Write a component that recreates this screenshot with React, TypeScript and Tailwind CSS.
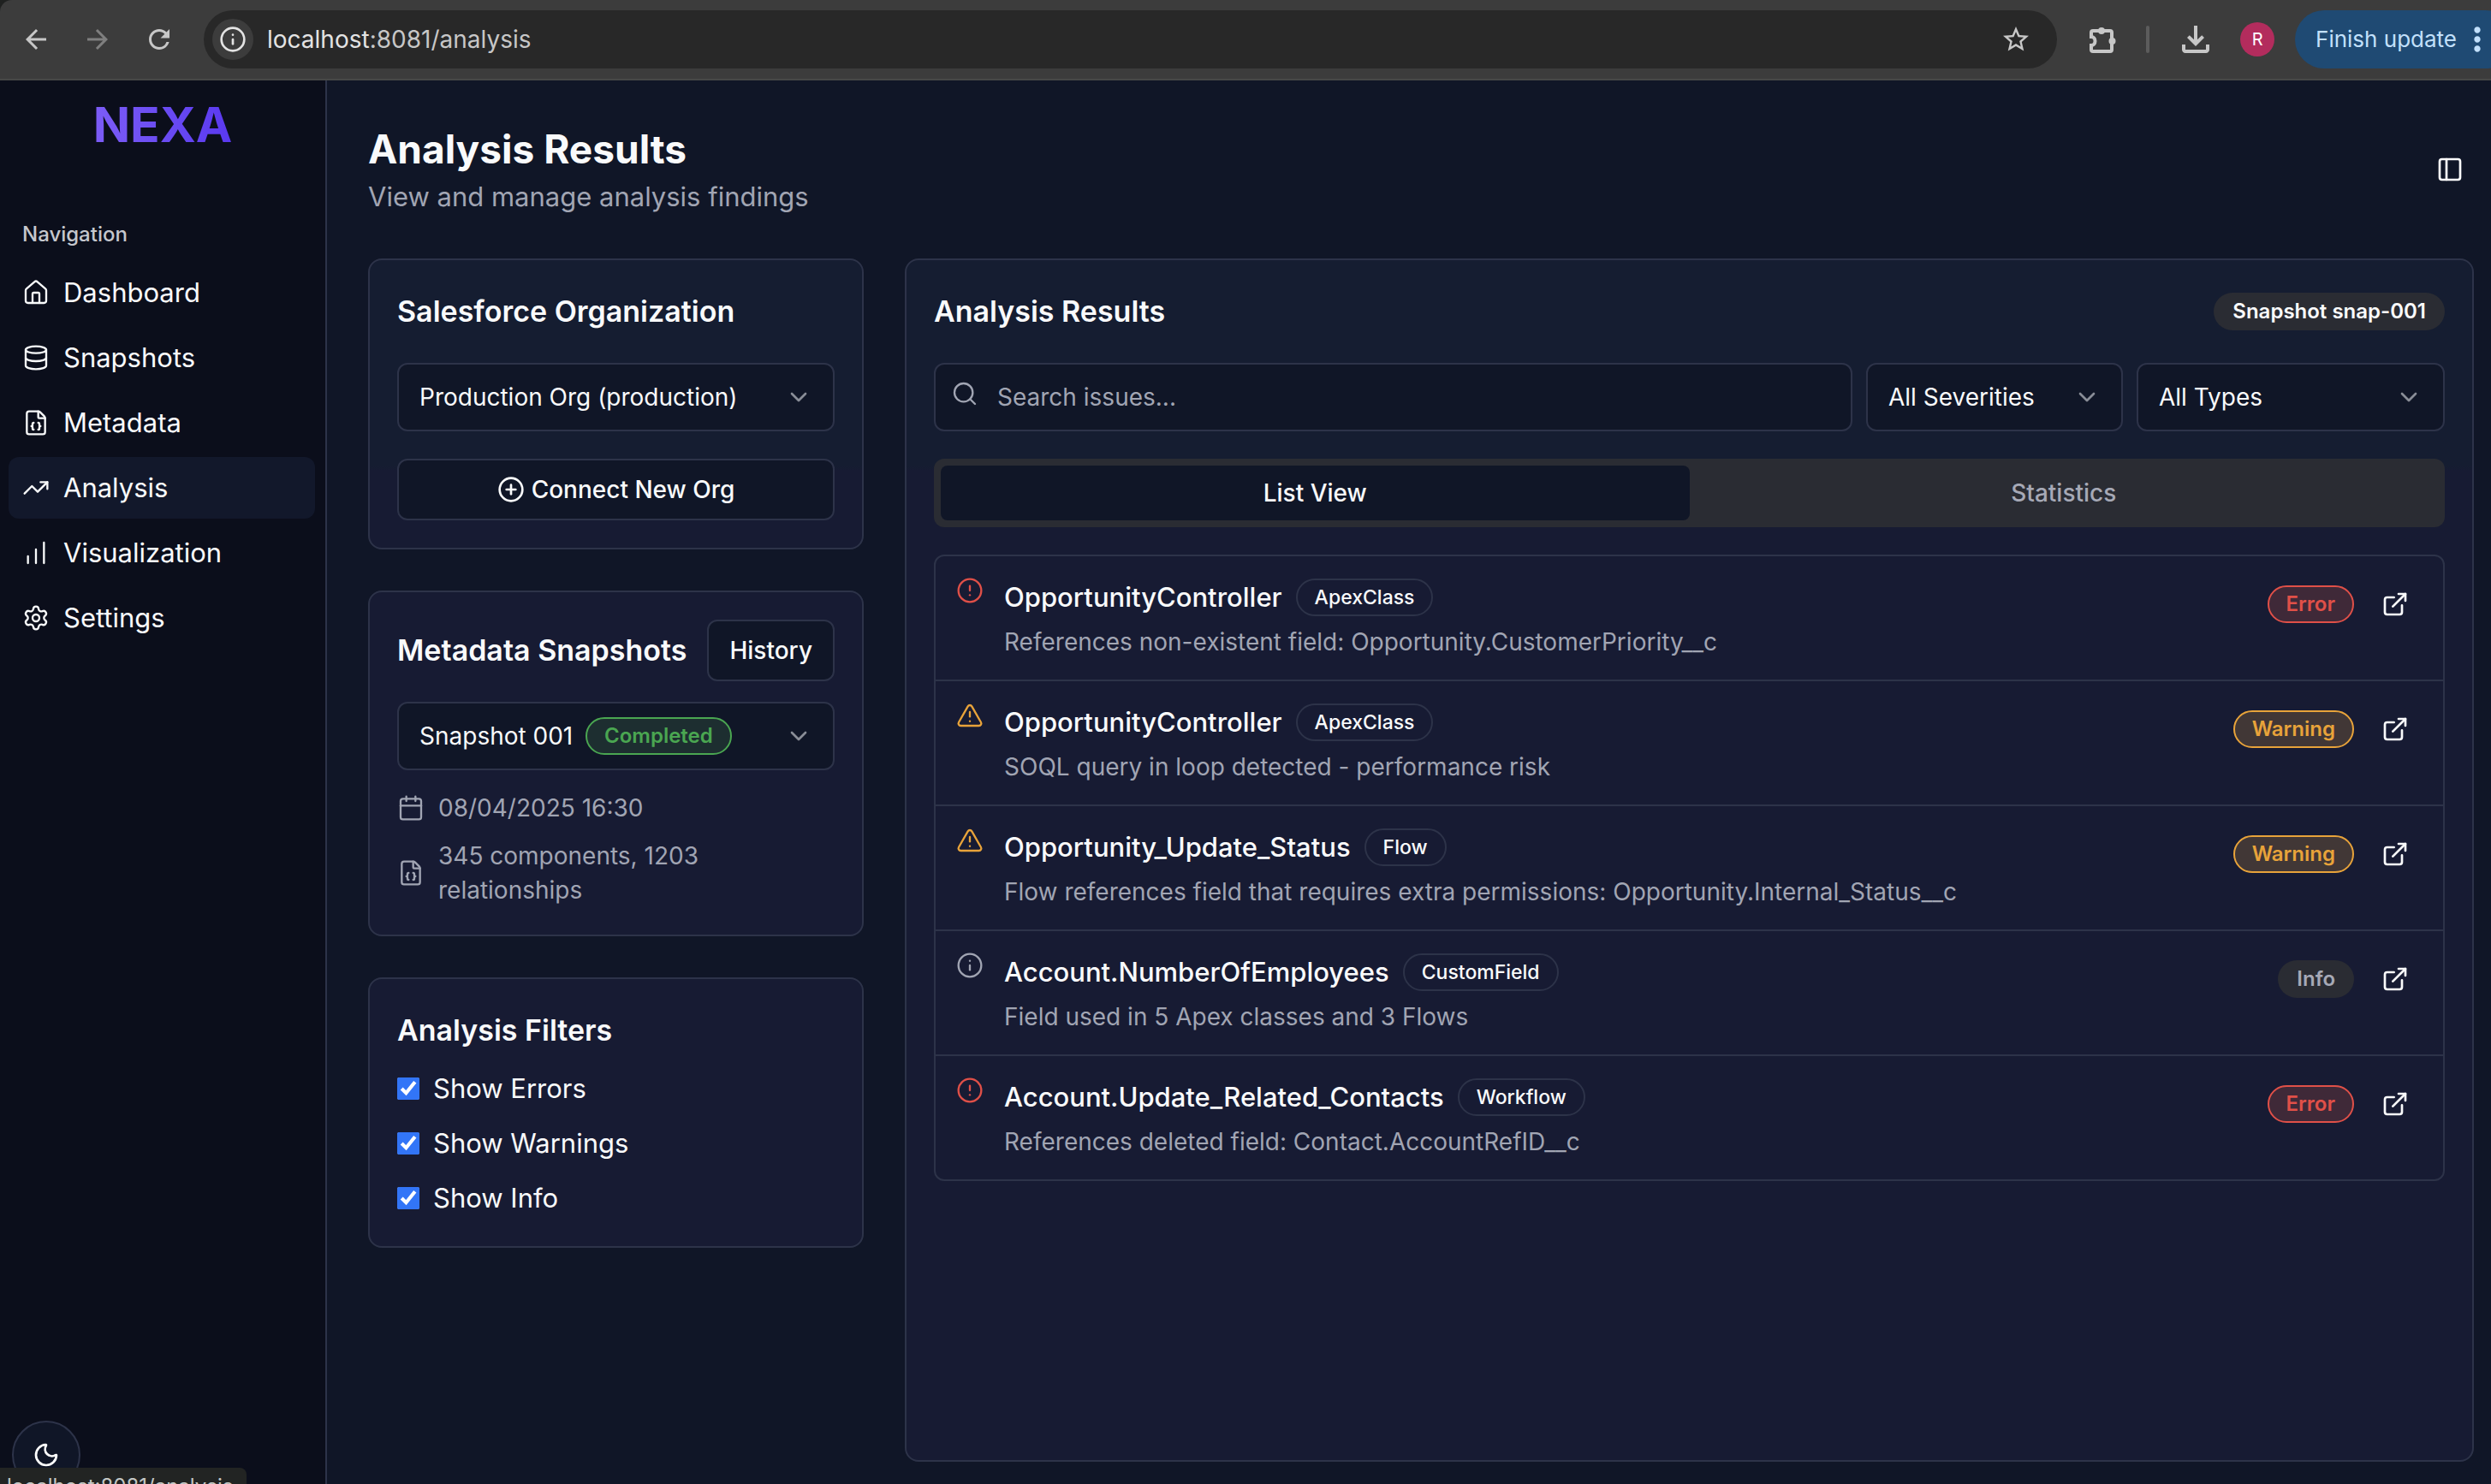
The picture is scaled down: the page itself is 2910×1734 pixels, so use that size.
import React, { useState } from "react";
import {
  Calendar,
  ChartNoAxesColumnIncreasing,
  ChevronDown,
  CircleAlert,
  CirclePlus,
  Database,
  ExternalLink,
  FileJson,
  House,
  Info,
  Moon,
  PanelLeft,
  Search,
  Settings,
  TrendingUp,
  TriangleAlert,
} from "lucide-react";
import {
  MdArrowBack,
  MdArrowForward,
  MdMoreVert,
  MdOutlineFileDownload,
  MdRefresh,
  MdStarBorder,
} from "react-icons/md";

type Severity = "Error" | "Warning" | "Info";

const issues: { name: string; type: string; text: string; severity: Severity }[] = [
  {
    name: "OpportunityController",
    type: "ApexClass",
    text: "References non-existent field: Opportunity.CustomerPriority__c",
    severity: "Error",
  },
  {
    name: "OpportunityController",
    type: "ApexClass",
    text: "SOQL query in loop detected - performance risk",
    severity: "Warning",
  },
  {
    name: "Opportunity_Update_Status",
    type: "Flow",
    text: "Flow references field that requires extra permissions: Opportunity.Internal_Status__c",
    severity: "Warning",
  },
  {
    name: "Account.NumberOfEmployees",
    type: "CustomField",
    text: "Field used in 5 Apex classes and 3 Flows",
    severity: "Info",
  },
  {
    name: "Account.Update_Related_Contacts",
    type: "Workflow",
    text: "References deleted field: Contact.AccountRefID__c",
    severity: "Error",
  },
];

const nav = [
  { label: "Dashboard", icon: House },
  { label: "Snapshots", icon: Database },
  { label: "Metadata", icon: FileJson },
  { label: "Analysis", icon: TrendingUp, active: true },
  { label: "Visualization", icon: ChartNoAxesColumnIncreasing },
  { label: "Settings", icon: Settings },
];

const badgeBase = "inline-flex h-11 items-center rounded-full border-2 px-5 leading-8 whitespace-nowrap";

const badgeTone: Record<Severity, string> = {
  Error: "border-[#e05048] bg-[#3f2938] text-[#e05048]",
  Warning: "border-[#e8a33a] bg-[#413736] text-[#e8a33a]",
  Info: "border-transparent bg-[#2a2c33] text-[#a6a9b6]",
};

function SeverityIcon({ severity }: { severity: Severity }) {
  if (severity === "Error") return <CircleAlert className="size-8 shrink-0 text-[#e05048]" strokeWidth={1.75} />;
  if (severity === "Warning") return <TriangleAlert className="size-8 shrink-0 text-[#e8a33a]" strokeWidth={1.75} />;
  return <Info className="size-8 shrink-0 text-[#a1a5b3]" strokeWidth={1.75} />;
}

function PuzzleIcon() {
  return (
    <svg viewBox="0 0 36 36" className="size-9" fill="none" stroke="currentColor" strokeWidth="4">
      <path d="M6 8H26a2 2 0 0 1 2 2V30a2 2 0 0 1-2 2H6a2 2 0 0 1-2-2v-5c2.600 0 4.500-2 4.500-5s-1.900-5-4.500-5v-5a2 2 0 0 1 2-2z" />
      <circle cx="16" cy="8" r="4" fill="currentColor" stroke="none" />
      <circle cx="28.500" cy="20" r="4" fill="currentColor" stroke="none" />
    </svg>
  );
}

function Dropdown({
  label,
  value,
  className = "",
  children,
}: {
  label: string;
  value: string;
  className?: string;
  children?: React.ReactNode;
}) {
  return (
    <div className={`relative ${className}`}>
      <select
        aria-label={label}
        className="h-20 w-full appearance-none rounded-xl border-2 border-[#2d3349] bg-[#101627] px-6 text-[28px] leading-10 text-[#f9fafb]"
      >
        <option>{value}</option>
      </select>
      {children}
      <ChevronDown className="pointer-events-none absolute top-6 right-6.5 size-8 text-[#898d97]" />
    </div>
  );
}

function BrowserBar() {
  return (
    <header className="bg-[#1f2120]">
      <div className="flex h-[94px] items-center rounded-tl-[14px] border-b-2 border-[#474847] bg-[#3c3c3c] text-[#c7c7c7]">
        <nav aria-label="Browser" className="ml-6 flex gap-9">
          <button aria-label="Back">
            <MdArrowBack className="size-9" />
          </button>
          <button aria-label="Forward" className="text-[#7f7f7f]">
            <MdArrowForward className="size-9" />
          </button>
          <button aria-label="Reload">
            <MdRefresh className="size-9" />
          </button>
        </nav>
        <div className="ml-8.5 flex h-17 flex-1 items-center rounded-full bg-[#282828] pr-7.5 pl-2.5">
          <button aria-label="Site information" className="grid size-12 place-items-center rounded-full bg-[#3c3c3c]">
            <Info className="size-8 text-[#e3e3e3]" strokeWidth={2} />
          </button>
          <p className="ml-4 flex-1 text-[28px] leading-10">
            <span className="text-[#e3e3e3]">localhost</span>:8081/analysis
          </p>
          <button aria-label="Bookmark this page">
            <MdStarBorder className="size-9" />
          </button>
        </div>
        <button aria-label="Extensions" className="ml-9">
          <PuzzleIcon />
        </button>
        <div className="ml-8 h-8 w-1 rounded-full bg-[#5c5c5c]" />
        <button aria-label="Downloads" className="ml-7.5">
          <MdOutlineFileDownload className="size-12" />
        </button>
        <button
          aria-label="Profile"
          className="ml-7 grid size-10 place-items-center rounded-full bg-[#b32c5d] text-xl text-white"
        >
          R
        </button>
        <button className="ml-6 -mr-7 flex h-17 items-center rounded-full bg-[#1f4a73] pr-5.5 pl-6 text-[26px] leading-10 text-[#c2e0fb]">
          Finish update
          <MdMoreVert className="ml-0.5 size-11" />
        </button>
      </div>
    </header>
  );
}

function Sidebar() {
  return (
    <aside className="relative w-[382px] shrink-0 border-r-2 border-[#2d3349] bg-[#0b0e1b]">
      <p className="mt-4 text-center text-[57px] leading-18 font-bold">
        <span className="bg-linear-to-r from-[#7c5cf6] to-[#5a38ef] bg-clip-text text-transparent">NEXA</span>
      </p>
      <h2 className="mt-19 ml-6.5 text-2xl leading-8 font-medium text-[#c5c7cd]">Navigation</h2>
      <nav aria-label="Main" className="mt-4 flex flex-col gap-1 pr-3 pl-2.5">
        {nav.map(({ label, icon: Icon, active }) => (
          <a
            key={label}
            href="#"
            aria-current={active ? "page" : undefined}
            className={`flex h-18 items-center gap-4 rounded-xl px-4 text-[31px] leading-12 text-[#f9fafb] ${
              active ? "bg-[#12182b]" : ""
            }`}
          >
            <Icon className="size-8" strokeWidth={1.75} />
            {label}
          </a>
        ))}
      </nav>
      <button
        aria-label="Toggle theme"
        className="absolute -bottom-1.5 left-3.5 grid size-20 place-items-center rounded-full border-2 border-[#2d3349] bg-[#101627] text-white"
      >
        <Moon className="size-8" />
      </button>
    </aside>
  );
}

const heading = "text-[34px] leading-14 font-semibold text-[#f9fafb]";
const outlineButton =
  "flex h-18 items-center justify-center gap-2 rounded-xl border-2 border-[#2d3349] bg-[#101627] px-6 text-[28px] leading-10 font-medium text-[#f9fafb]";
const cardBase = "rounded-2xl border-2 border-[#2d3349] p-8";
const cardTop = "bg-[linear-gradient(#151d31_240px,#171b33_246px)]";

function Filters() {
  return (
    <div className="flex flex-col gap-12">
      <section className={`${cardBase} ${cardTop}`}>
        <h2 className={heading}>Salesforce Organization</h2>
        <Dropdown label="Organization" value="Production Org (production)" className="mt-8" />
        <button className={`${outlineButton} mt-8 w-full`}>
          <CirclePlus className="size-8" />
          Connect New Org
        </button>
      </section>

      <section className={`${cardBase} bg-[#171b33]`}>
        <div className="flex items-center justify-between">
          <h2 className={`${heading} whitespace-nowrap`}>Metadata Snapshots</h2>
          <button className={outlineButton}>History</button>
        </div>
        <Dropdown label="Snapshot" value="Snapshot 001" className="mt-6">
          <span
            className={`${badgeBase} pointer-events-none absolute top-4.5 left-55 border-[#4aa651] bg-[#1d2e30] text-2xl font-semibold text-[#4aa651]`}
          >
            Completed
          </span>
        </Dropdown>
        <div className="mt-6 flex flex-col gap-4 text-[28px] leading-10 text-[#a1a5b3]">
          <p className="flex items-center gap-4">
            <Calendar className="size-8 shrink-0" strokeWidth={1.75} />
            08/04/2025 16:30
          </p>
          <p className="flex items-center gap-4 pr-8">
            <FileJson className="size-8 shrink-0" strokeWidth={1.75} />
            345 components, 1203 relationships
          </p>
        </div>
      </section>

      <section className={`${cardBase} bg-[#171b33]`}>
        <h2 className={heading}>Analysis Filters</h2>
        <div className="mt-4 flex flex-col gap-4">
          {["Show Errors", "Show Warnings", "Show Info"].map((label) => (
            <label key={label} className="flex items-center gap-4 text-[31px] leading-12 text-[#f9fafb]">
              <input type="checkbox" defaultChecked className="size-6.5 accent-[#3275f7]" />
              {label}
            </label>
          ))}
        </div>
      </section>
    </div>
  );
}

function Results() {
  const [tab, setTab] = useState("List View");
  return (
    <section className={`${cardBase} ${cardTop} col-span-3 flex flex-col`}>
      <div className="flex items-center justify-between">
        <h2 className={heading}>Analysis Results</h2>
        <span className={`${badgeBase} border-transparent bg-[#2a2c33] text-2xl font-semibold text-[#f9fafb]`}>
          Snapshot snap-001
        </span>
      </div>

      <div className="mt-8 flex gap-4">
        <div className="relative flex-1">
          <Search className="absolute top-5 left-5 size-8 text-[#a1a5b3]" strokeWidth={1.75} />
          <input
            type="search"
            aria-label="Search issues"
            placeholder="Search issues..."
            className="h-20 w-full rounded-xl border-2 border-[#2d3349] bg-[#101627] pr-6 pl-18 text-[28px] leading-10 text-[#f9fafb] placeholder:text-[#a1a5b3]"
          />
        </div>
        <Dropdown label="Severity" value="All Severities" className="w-75" />
        <Dropdown label="Type" value="All Types" className="w-90" />
      </div>

      <div role="tablist" className="mt-8 grid h-20 grid-cols-2 rounded-xl bg-[#2a2c33] p-2">
        {["List View", "Statistics"].map((name) => (
          <button
            key={name}
            role="tab"
            aria-selected={tab === name}
            onClick={() => setTab(name)}
            className={`rounded-lg text-[28px] leading-10 font-medium ${
              tab === name ? "bg-[#101627] text-[#f9fafb]" : "text-[#a6a9b6]"
            }`}
          >
            {name}
          </button>
        ))}
      </div>

      <ul className="mt-8 divide-y-2 divide-[#2d3349] rounded-xl border-2 border-[#2d3349]">
        {issues.map((issue) => (
          <li key={issue.name + issue.text} className="flex items-start gap-6 p-6">
            <SeverityIcon severity={issue.severity} />
            <div className="flex-1">
              <div className="flex items-center gap-4">
                <h3 className="text-[31px] leading-12 font-medium text-[#f9fafb]">{issue.name}</h3>
                <span className={`${badgeBase} border-[#2d3349] text-[23px] font-medium text-[#f9fafb]`}>
                  {issue.type}
                </span>
              </div>
              <p className="mt-2 text-[28px] leading-10 text-[#a1a5b3]">{issue.text}</p>
            </div>
            <div className="flex items-center gap-4">
              <span className={`${badgeBase} ${badgeTone[issue.severity]} text-2xl font-semibold`}>
                {issue.severity}
              </span>
              <button aria-label={`Open ${issue.name}`} className="grid size-16 place-items-center text-[#f9fafb]">
                <ExternalLink className="size-8" />
              </button>
            </div>
          </li>
        ))}
      </ul>
    </section>
  );
}

export default function App() {
  return (
    <div className="relative flex min-h-screen flex-col overflow-hidden font-[Inter,sans-serif]">
      <BrowserBar />
      <div className="flex flex-1">
        <Sidebar />
        <main className="flex flex-1 flex-col bg-[#101627] pt-12 pr-5 pb-6.5 pl-12">
          <div className="flex items-center justify-between">
            <div>
              <h1 className="text-[46px] leading-16 font-bold text-[#f9fafb]">Analysis Results</h1>
              <p className="text-[31px] leading-12 text-[#a1a5b3]">View and manage analysis findings</p>
            </div>
            <button aria-label="Toggle sidebar" className="mr-3 text-white">
              <PanelLeft className="size-8" />
            </button>
          </div>
          <div className="mt-12 grid flex-1 grid-cols-4 gap-12">
            <Filters />
            <Results />
          </div>
        </main>
      </div>
      <div className="absolute bottom-0 left-0 h-[19px] overflow-hidden rounded-tr-lg bg-[#222423] pt-1.5 pr-4 pl-2 text-2xl leading-8 text-[#c4c7c5]">
        localhost:8081/analysis
      </div>
    </div>
  );
}
